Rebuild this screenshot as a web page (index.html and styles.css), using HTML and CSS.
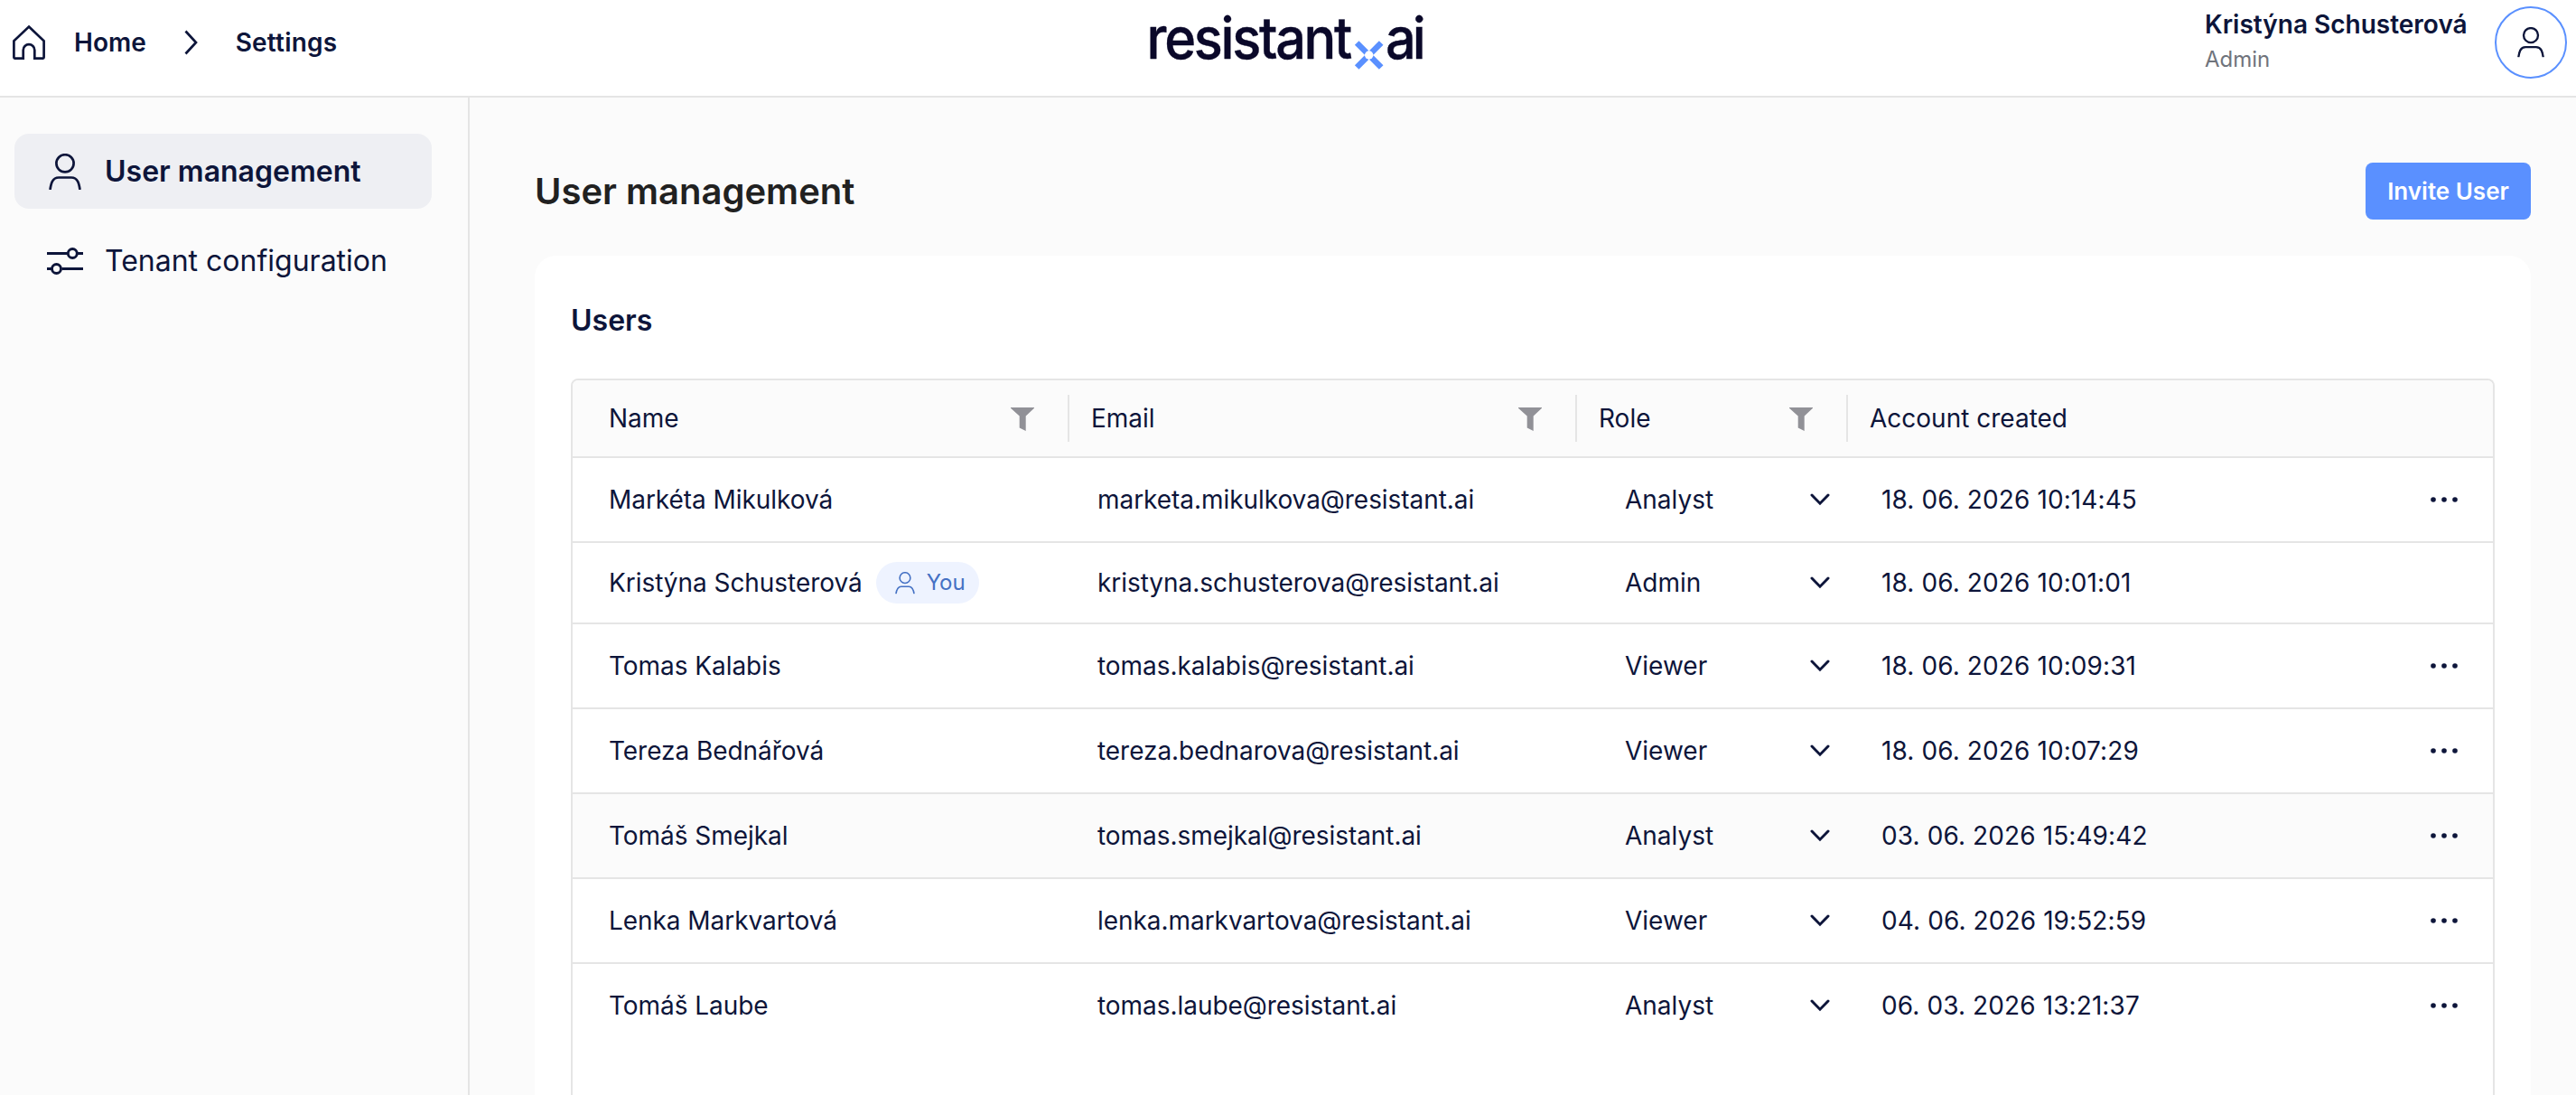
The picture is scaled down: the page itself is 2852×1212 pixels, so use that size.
FILE: index.html
```html
<!DOCTYPE html>
<html lang="en">
<head>
<meta charset="utf-8">
<title>User management</title>
<link rel="stylesheet" href="styles.css">
</head>
<body>
<svg width="0" height="0" class="defs" aria-hidden="true">
  <symbol id="user" viewBox="0 0 36 40"><circle cx="18" cy="10.8" r="9.6"/><path d="M1.5 40C2.5 33 4 26.5 11 26.5h14c7 0 8.500 6.500 9.500 13.500"/></symbol>
  <symbol id="funnel" viewBox="0 0 26 26"><path d="M0 0h26v.8L16.700 9.500V26L9.700 22.500V9.500L0 .8z"/></symbol>
  <symbol id="down" viewBox="0 0 22 14"><path d="M2 2l9 9.200L20 2"/></symbol>
  <symbol id="dots" viewBox="0 0 30 6"><circle cx="3" cy="3" r="2.800"/><circle cx="15" cy="3" r="2.800"/><circle cx="27" cy="3" r="2.800"/></symbol>
</svg>

<header class="topbar">
  <nav class="crumbs">
    <svg class="home" viewBox="0 0 36 38"><path d="M18 1.600L34.600 17.300V35.600a1 1 0 0 1-1 1H24.300V27.500a6.300 6.300 0 0 0-12.600 0V36.600H2.400a1 1 0 0 1-1-1V17.300z"/></svg>
    <a>Home</a>
    <svg class="sep" viewBox="0 0 15 28"><path d="M1.500 1.500L13 14L1.500 26.500"/></svg>
    <a class="current">Settings</a>
  </nav>
  <svg class="logo" viewBox="0 0 312 80">
    <text class="logo-a" transform="translate(-2.400 61) scale(.93 1)">resistant</text>
    <g class="logo-x" transform="translate(243.700 57)"><path d="M-13.500 -13.500L-2.500 -2.500M13.500 -13.500L2.500 -2.500M-13.500 13.500L-2.500 2.500M13.500 13.500L2.500 2.500"/><circle r="4.700"/></g>
    <text class="logo-b" transform="translate(262 61) scale(.93 1)">ai</text>
  </svg>
  <div class="account">
    <div class="who"><span class="who-name">Kristýna Schusterová</span><span class="who-role">Admin</span></div>
    <div class="avatar"><svg class="line"><use href="#user"/></svg></div>
  </div>
</header>

<div class="body">
  <aside class="sidebar">
    <a class="item active"><svg class="icon-user"><use href="#user"/></svg>User management</a>
    <a class="item"><svg class="icon-sliders" viewBox="0 0 40 30"><path d="M0 6.500h22.500M34 6.500h6M0 23.500h5M16.500 23.500H40"/><circle cx="28.300" cy="6.500" r="5"/><circle cx="10.500" cy="23.500" r="5"/></svg>Tenant configuration</a>
  </aside>

  <main class="main">
    <div class="title-row"><h1>User management</h1><button>Invite User</button></div>
    <section class="card">
      <h2>Users</h2>
      <div class="table">
        <div class="row head">
          <div class="th">Name<svg class="funnel"><use href="#funnel"/></svg></div>
          <div class="th">Email<svg class="funnel"><use href="#funnel"/></svg></div>
          <div class="th">Role<svg class="funnel"><use href="#funnel"/></svg></div>
          <div class="th">Account created</div>
        </div>
        <div class="row"><div class="name">Markéta Mikulková</div><div class="email">marketa.mikulkova@resistant.ai</div><div class="role">Analyst<svg><use href="#down"/></svg></div><div class="date">18. 06. 2026 10:14:45<svg><use href="#dots"/></svg></div></div>
        <div class="row self"><div class="name">Kristýna Schusterová<span class="you"><svg><use href="#user"/></svg>You</span></div><div class="email">kristyna.schusterova@resistant.ai</div><div class="role">Admin<svg><use href="#down"/></svg></div><div class="date">18. 06. 2026 10:01:01</div></div>
        <div class="row"><div class="name">Tomas Kalabis</div><div class="email">tomas.kalabis@resistant.ai</div><div class="role">Viewer<svg><use href="#down"/></svg></div><div class="date">18. 06. 2026 10:09:31<svg><use href="#dots"/></svg></div></div>
        <div class="row"><div class="name">Tereza Bednářová</div><div class="email">tereza.bednarova@resistant.ai</div><div class="role">Viewer<svg><use href="#down"/></svg></div><div class="date">18. 06. 2026 10:07:29<svg><use href="#dots"/></svg></div></div>
        <div class="row hovered"><div class="name">Tomáš Smejkal</div><div class="email">tomas.smejkal@resistant.ai</div><div class="role">Analyst<svg><use href="#down"/></svg></div><div class="date">03. 06. 2026 15:49:42<svg><use href="#dots"/></svg></div></div>
        <div class="row"><div class="name">Lenka Markvartová</div><div class="email">lenka.markvartova@resistant.ai</div><div class="role">Viewer<svg><use href="#down"/></svg></div><div class="date">04. 06. 2026 19:52:59<svg><use href="#dots"/></svg></div></div>
        <div class="row last"><div class="name">Tomáš Laube</div><div class="email">tomas.laube@resistant.ai</div><div class="role">Analyst<svg><use href="#down"/></svg></div><div class="date">06. 03. 2026 13:21:37<svg><use href="#dots"/></svg></div></div>
      </div>
    </section>
  </main>
</div>
</body>
</html>
```
FILE: styles.css
```css
* { box-sizing: border-box; }
body {
  margin: 0;
  height: 1212px;
  overflow: hidden;
  display: flex;
  flex-direction: column;
  font-family: Inter, sans-serif;
  font-size: 28px;
  line-height: 34px;
  color: #0d153a;
  background: #fbfbfb;
}
svg { flex: none; fill: none; stroke: #0d153a; overflow: visible; }
.defs { display: none; }

/* Top bar */
.topbar {
  flex: none;
  height: 108px;
  padding: 0 10px 12px 14px;
  display: grid;
  grid-template-columns: 1fr 312px 1fr;
  align-items: center;
  background: #fff;
  border-bottom: 2px solid #e5e5e5;
}
.crumbs { display: flex; align-items: center; font-weight: 600; }
.current { letter-spacing: .2px; }
.home { width: 36px; height: 38px; margin-right: 32px; stroke-width: 2.7; }
.sep { width: 15px; height: 28px; margin: 0 42px 0 42px; stroke-width: 2.7; }
.logo { width: 312px; height: 80px; margin-bottom: 6px; }
.logo text { font-size: 64px; font-weight: 500; fill: #0a0829; stroke: #0a0829; stroke-width: .4; }
.logo-a { letter-spacing: -2.5px; }
.logo-b { letter-spacing: -4.3px; }
.logo-x { stroke: #5a90ff; stroke-width: 6.5; }
.logo-x circle { fill: #fff; stroke: none; }
.account { display: flex; justify-content: flex-end; align-items: center; }
.who { display: flex; flex-direction: column; gap: 6px; width: 321px; margin-top: -3px; }
.who-name { font-weight: 600; }
.who-role { font-size: 24px; line-height: 32px; color: #70747c; }
.avatar {
  width: 80px;
  height: 80px;
  display: flex;
  align-items: center;
  justify-content: center;
  border: 2px solid #5a90ff;
  border-radius: 50%;
}
.avatar svg { width: 30px; height: 33.500px; stroke-width: 2.800; }

.body { flex: 1; display: flex; min-height: 0; }

/* Sidebar */
.sidebar {
  flex: none;
  width: 520px;
  padding: 40px 40px 0 16px;
  display: flex;
  flex-direction: column;
  gap: 16px;
  border-right: 2px solid #e5e5e5;
}
.item { height: 83px; padding-left: 36px; display: flex; align-items: center; font-size: 32px; line-height: 40px; border-radius: 16px; }
.item.active { background: #eeeff3; font-weight: 600; }
.icon-user { width: 36px; height: 40px; margin: 0 26px 0 2px; stroke-width: 2.700; }
.icon-sliders { width: 40px; height: 30px; margin-right: 24px; stroke-width: 2.900; }

/* Main */
.main { flex: 1; display: flex; flex-direction: column; padding: 72px 50px 0 72px; }
.title-row { flex: none; height: 63px; display: flex; align-items: center; justify-content: space-between; }
h1 { margin: 0; font-size: 40px; line-height: 48px; font-weight: 600; color: #212121; }
button {
  width: 183px;
  height: 63px;
  padding: 0;
  border: 0;
  border-radius: 8px;
  background: #5a90ff;
  color: #fff;
  font: 600 26px/32px Inter, sans-serif;
}
.card { flex: 1; display: flex; flex-direction: column; margin-top: 40px; padding: 52px 40px 0; background: #fff; border-radius: 24px 24px 0 0; }
h2 { margin: 0 0 44px; font-size: 32px; line-height: 40px; font-weight: 600; }

/* Table */
.table { flex: 1; border: 2px solid #e5e5e5; border-bottom: 0; border-radius: 8px 8px 0 0; overflow: hidden; }
.row { display: grid; grid-template-columns: 550px 562px 300px 1fr; align-items: center; height: 94px; border-bottom: 2px solid #e5e5e5; }
.row > div { display: flex; align-items: center; white-space: nowrap; }
.head { height: 86px; background: #fbfbfb; }
.self { height: 90px; }
.hovered { background: #fbfbfb; }
.last { border-bottom: 0; height: 92px; }
.row > .th { height: 52px; padding: 0 37px 0 24px; justify-content: space-between; border-right: 2px solid #e5e5e5; }
.row > .th:first-child { padding-left: 40px; }
.row > .th:last-child { border-right: 0; }
.funnel { width: 26px; height: 26px; fill: #919197; stroke: none; margin-top: 2px; }
.name { padding-left: 40px; letter-spacing: -.05px; }
.email { padding-left: 31px; letter-spacing: -.05px; }
.row > .role { padding: 0 20px 0 53px; justify-content: space-between; }
.role svg { width: 22px; height: 14px; stroke-width: 3; stroke-linecap: round; }
.row > .date { padding: 0 39px 0 37px; justify-content: space-between; letter-spacing: .1px; }
.date svg { width: 30px; height: 6px; fill: #0d153a; stroke: none; }
.you {
  width: 114px;
  height: 46px;
  margin-left: 15px;
  padding-left: 21px;
  display: flex;
  align-items: center;
  gap: 13px;
  border-radius: 23px;
  background: #eef3ff;
  color: #4571c4;
  font-size: 24px;
}
.you svg { width: 22px; height: 24.500px; stroke: #4571c4; stroke-width: 2.600; }
```
